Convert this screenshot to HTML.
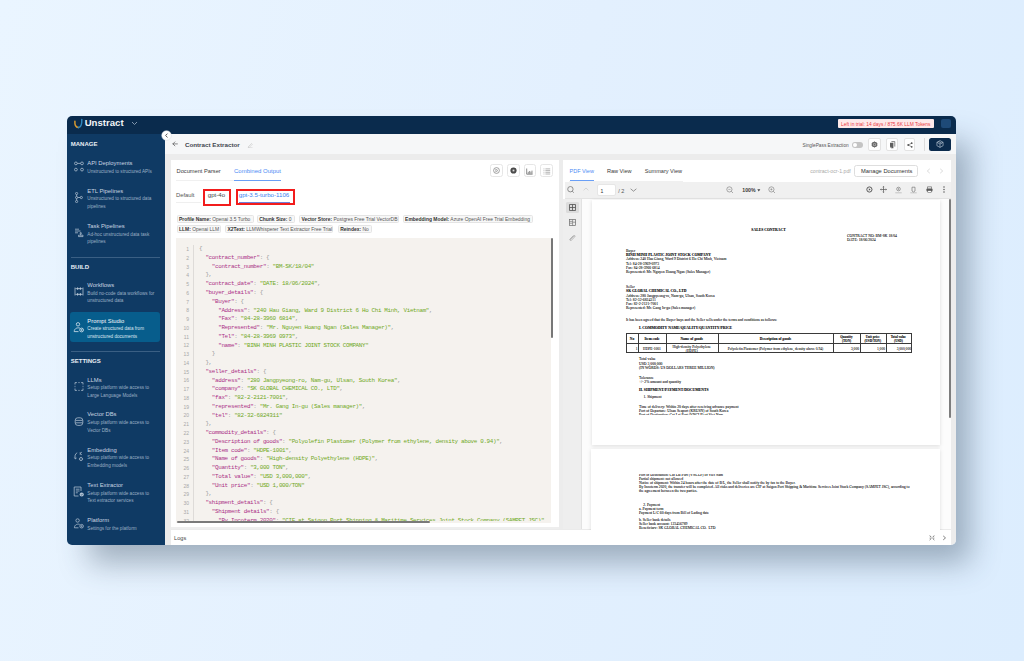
<!DOCTYPE html>
<html><head><meta charset="utf-8">
<style>
*{margin:0;padding:0;box-sizing:border-box}
html,body{width:1024px;height:661px;overflow:hidden}
body{position:relative;font-family:"Liberation Sans",sans-serif;background:linear-gradient(105deg,#eaf5ff 0%,#e3f0fe 50%,#dcedfe 100%)}
.a{position:absolute;white-space:nowrap}
.pd{text-shadow:0 0 0.25px rgba(0,0,0,.6)}
#shadow{position:absolute;left:67px;top:116px;width:889px;height:429px;border-radius:5px;box-shadow:18px 22px 30px -4px rgba(45,66,88,.38)}
#win{position:absolute;left:0;top:0;width:1024px;height:661px;clip-path:inset(116px 68px 116px 67px round 5px)}
</style></head><body>
<div id="shadow"></div>
<div id="win">
<div class="a" style="left:67px;top:116px;width:889.00px;height:18.00px;background:#0a2b4d"></div>
<div class="a" style="left:67px;top:134px;width:98.40px;height:411.00px;background:#0f3a64"></div>
<div class="a" style="left:165.4px;top:134px;width:790.60px;height:411.00px;background:#ececec"></div>
<div class="a" style="left:165.4px;top:134px;width:790.60px;height:20.00px;background:#f6f7f8"></div>
<div class="a" style="left:170.7px;top:159.8px;width:388.30px;height:367.40px;background:#fff"></div>
<div class="a" style="left:563px;top:159.8px;width:388.20px;height:369.20px;background:#fff"></div>
<div class="a" style="left:170.7px;top:529px;width:780.50px;height:16.00px;background:#fff;border-top:1px solid #ebebeb"></div>
<svg class="a" style="left:73px;top:118px;" width="11" height="12" viewBox="0 0 11 12"><path d="M1.9 3.2 C1.6 6.8 2.9 9.2 5.4 9.6" stroke="#d99a2e" stroke-width="1.5" fill="none" stroke-linecap="round"/><path d="M5.4 9.6 C7.8 9.2 9 7 8.8 1.4" stroke="#2f86bd" stroke-width="1.5" fill="none" stroke-linecap="round"/></svg>
<div class="a" style="left:84.70px;top:118.10px;font-size:9.6px;line-height:9.6px;color:#f2f5f8;font-weight:700;font-family:'Liberation Sans';">Unstract</div>
<svg class="a" style="left:131px;top:121px;" width="7" height="5" viewBox="0 0 7 5"><path d="M1 1 L3.5 3.5 L6 1" stroke="#8fa3b8" stroke-width="0.9" fill="none"/></svg>
<div class="a" style="left:838.1px;top:119.2px;width:95.70px;height:8.80px;background:#fde9ea;border-radius:1px"></div>
<div class="a" style="left:841.10px;top:122.96px;font-size:4.89px;line-height:4.89px;color:#ea3a3f;font-weight:400;font-family:'Liberation Sans';">Left in trial: 14 days / 875.6K LLM Tokens</div>
<div class="a" style="left:941px;top:118.7px;width:10.40px;height:9.60px;background:#1e4a78;border-radius:2px"></div>
<div class="a" style="left:70.70px;top:141.29px;font-size:6.03px;line-height:6.03px;color:#e8eef4;font-weight:700;font-family:'Liberation Sans';">MANAGE</div>
<div class="a" style="left:87.30px;top:160.97px;font-size:5.85px;line-height:5.85px;color:#c9d5e1;font-weight:400;font-family:'Liberation Sans';">API Deployments</div>
<div class="a" style="left:87.30px;top:169.58px;font-size:4.65px;line-height:4.65px;color:#9cb0c4;font-weight:400;font-family:'Liberation Sans';">Unstructured to structured APIs</div>
<svg class="a" style="left:73px;top:160.5px;" width="12" height="11" viewBox="0 0 12 11"><g stroke="#b3c3d3" stroke-width="0.75" fill="none"><circle cx="2.9" cy="2.4" r="1.4"/><circle cx="9" cy="2.4" r="1.4"/><path d="M4.3 2.4 H7.6"/><circle cx="2.9" cy="8.6" r="1.4"/><circle cx="9" cy="8.6" r="1.4"/></g></svg>
<div class="a" style="left:87.30px;top:188.57px;font-size:5.85px;line-height:5.85px;color:#c9d5e1;font-weight:400;font-family:'Liberation Sans';">ETL Pipelines</div>
<div class="a" style="left:87.30px;top:197.18px;font-size:4.65px;line-height:4.65px;color:#9cb0c4;font-weight:400;font-family:'Liberation Sans';">Unstructured to structured data</div>
<div class="a" style="left:87.30px;top:204.68px;font-size:4.65px;line-height:4.65px;color:#9cb0c4;font-weight:400;font-family:'Liberation Sans';">pipelines</div>
<svg class="a" style="left:73px;top:191.85px;" width="12" height="11" viewBox="0 0 12 11"><g stroke="#b3c3d3" stroke-width="0.75" fill="none"><circle cx="3.6" cy="1.5" r="1.1"/><circle cx="3.6" cy="5.5" r="1.1"/><circle cx="3.6" cy="9.5" r="1.1"/><circle cx="8.3" cy="5.5" r="1.1"/><path d="M4.7 5.5 H7.2 M3.6 2.6 V4.4 M3.6 6.6 V8.4"/></g></svg>
<div class="a" style="left:87.30px;top:224.07px;font-size:5.85px;line-height:5.85px;color:#c9d5e1;font-weight:400;font-family:'Liberation Sans';">Task Pipelines</div>
<div class="a" style="left:87.30px;top:232.68px;font-size:4.65px;line-height:4.65px;color:#9cb0c4;font-weight:400;font-family:'Liberation Sans';">Ad-hoc unstructured data task</div>
<div class="a" style="left:87.30px;top:240.18px;font-size:4.65px;line-height:4.65px;color:#9cb0c4;font-weight:400;font-family:'Liberation Sans';">pipelines</div>
<svg class="a" style="left:73px;top:227.35px;" width="12" height="11" viewBox="0 0 12 11"><g stroke="#b3c3d3" stroke-width="0.75" fill="none"><path d="M2 2.2 H6 M2 4 H7.5 M2 5.8 H5"/><path d="M5.5 9.6 H10 V8.2 H5.5 Z M7.7 8.2 V6.6"/><circle cx="7.7" cy="6.2" r="0.7"/></g></svg>
<div class="a" style="left:71px;top:257.2px;width:89.00px;height:0.80px;background:#3a5f84"></div>
<div class="a" style="left:70.70px;top:263.88px;font-size:6.03px;line-height:6.03px;color:#e8eef4;font-weight:700;font-family:'Liberation Sans';">BUILD</div>
<div class="a" style="left:87.30px;top:282.97px;font-size:5.85px;line-height:5.85px;color:#c9d5e1;font-weight:400;font-family:'Liberation Sans';">Workflows</div>
<div class="a" style="left:87.30px;top:291.57px;font-size:4.65px;line-height:4.65px;color:#9cb0c4;font-weight:400;font-family:'Liberation Sans';">Build no-code data workflows for</div>
<div class="a" style="left:87.30px;top:299.07px;font-size:4.65px;line-height:4.65px;color:#9cb0c4;font-weight:400;font-family:'Liberation Sans';">unstructured data</div>
<svg class="a" style="left:73px;top:286.25px;" width="12" height="11" viewBox="0 0 12 11"><g stroke="#b3c3d3" stroke-width="0.75" fill="none"><path d="M2 1.5 V9.5 M10 1.5 V9.5"/><path d="M2 2.6 H10 M2 8.4 H10" stroke-width="0.5"/><circle cx="4.6" cy="2.6" r="0.8" fill="#b3c3d3"/><circle cx="7.4" cy="2.6" r="0.8" fill="#b3c3d3"/><circle cx="4.6" cy="8.4" r="0.8" fill="#b3c3d3"/><circle cx="7.4" cy="8.4" r="0.8" fill="#b3c3d3"/></g></svg>
<div class="a" style="left:70.3px;top:311.5px;width:90.20px;height:30.90px;background:#075d8c;border-radius:3px"></div>
<div class="a" style="left:87.30px;top:318.68px;font-size:5.85px;line-height:5.85px;color:#f4f7fa;font-weight:400;font-family:'Liberation Sans';">Prompt Studio</div>
<div class="a" style="left:87.30px;top:327.28px;font-size:4.65px;line-height:4.65px;color:#dfe9f2;font-weight:400;font-family:'Liberation Sans';">Create structured data from</div>
<div class="a" style="left:87.30px;top:334.78px;font-size:4.65px;line-height:4.65px;color:#dfe9f2;font-weight:400;font-family:'Liberation Sans';">unstructured documents</div>
<svg class="a" style="left:73px;top:321.95000000000005px;" width="12" height="11" viewBox="0 0 12 11"><g stroke="#e3ecf4" stroke-width="0.75" fill="none"><circle cx="5" cy="2.3" r="1.7"/><path d="M1.2 9.6 C1.2 6.2 5 5.2 7 6.2"/><path d="M1.2 9.6 H5.5"/><circle cx="8.6" cy="8" r="1.9"/><circle cx="8.6" cy="8" r="0.6"/></g></svg>
<div class="a" style="left:71px;top:351.1px;width:89.00px;height:0.80px;background:#3a5f84"></div>
<div class="a" style="left:70.70px;top:358.38px;font-size:6.03px;line-height:6.03px;color:#e8eef4;font-weight:700;font-family:'Liberation Sans';">SETTINGS</div>
<div class="a" style="left:87.30px;top:377.57px;font-size:5.85px;line-height:5.85px;color:#c9d5e1;font-weight:400;font-family:'Liberation Sans';">LLMs</div>
<div class="a" style="left:87.30px;top:386.18px;font-size:4.65px;line-height:4.65px;color:#9cb0c4;font-weight:400;font-family:'Liberation Sans';">Setup platform wide access to</div>
<div class="a" style="left:87.30px;top:393.68px;font-size:4.65px;line-height:4.65px;color:#9cb0c4;font-weight:400;font-family:'Liberation Sans';">Large Language Models</div>
<svg class="a" style="left:73px;top:380.85px;" width="12" height="11" viewBox="0 0 12 11"><g stroke="#b3c3d3" stroke-width="0.75" fill="none"><path d="M2 3.5 V1.6 H3.9 M8.1 1.6 H10 V3.5 M10 7.5 V9.4 H8.1 M3.9 9.4 H2 V7.5"/><path d="M5.2 1.6 H6.8 M5.2 9.4 H6.8 M2 4.8 V6.2 M10 4.8 V6.2" stroke-width="0.6"/></g></svg>
<div class="a" style="left:87.30px;top:412.47px;font-size:5.85px;line-height:5.85px;color:#c9d5e1;font-weight:400;font-family:'Liberation Sans';">Vector DBs</div>
<div class="a" style="left:87.30px;top:421.07px;font-size:4.65px;line-height:4.65px;color:#9cb0c4;font-weight:400;font-family:'Liberation Sans';">Setup platform wide access to</div>
<div class="a" style="left:87.30px;top:428.57px;font-size:4.65px;line-height:4.65px;color:#9cb0c4;font-weight:400;font-family:'Liberation Sans';">Vector DBs</div>
<svg class="a" style="left:73px;top:415.75px;" width="12" height="11" viewBox="0 0 12 11"><g stroke="#b3c3d3" stroke-width="0.75" fill="none"><rect x="2.2" y="1.8" width="7.6" height="7.6" rx="2.6"/><path d="M2.4 4.4 H9.6 M2.4 6.8 H9.6"/></g></svg>
<div class="a" style="left:87.30px;top:447.88px;font-size:5.85px;line-height:5.85px;color:#c9d5e1;font-weight:400;font-family:'Liberation Sans';">Embedding</div>
<div class="a" style="left:87.30px;top:456.48px;font-size:4.65px;line-height:4.65px;color:#9cb0c4;font-weight:400;font-family:'Liberation Sans';">Setup platform wide access to</div>
<div class="a" style="left:87.30px;top:463.98px;font-size:4.65px;line-height:4.65px;color:#9cb0c4;font-weight:400;font-family:'Liberation Sans';">Embedding models</div>
<svg class="a" style="left:73px;top:451.15000000000003px;" width="12" height="11" viewBox="0 0 12 11"><g stroke="#b3c3d3" stroke-width="0.75" fill="none"><path d="M4.2 1.8 C2 2.6 1.5 5.5 2.4 7.8 M1.4 6.6 L2.4 7.9 L3.6 7"/><path d="M7.2 1 V4 M7.2 2.5 L9 1 M7.2 2.5 L9 4" stroke-width="0.6"/><circle cx="8" cy="8" r="1.5"/><path d="M8 5.9 V6.5 M8 9.5 V10.1 M5.9 8 H6.5 M9.5 8 H10.1" stroke-width="0.6"/></g></svg>
<div class="a" style="left:87.30px;top:483.07px;font-size:5.85px;line-height:5.85px;color:#c9d5e1;font-weight:400;font-family:'Liberation Sans';">Text Extractor</div>
<div class="a" style="left:87.30px;top:491.68px;font-size:4.65px;line-height:4.65px;color:#9cb0c4;font-weight:400;font-family:'Liberation Sans';">Setup platform wide access to</div>
<div class="a" style="left:87.30px;top:499.18px;font-size:4.65px;line-height:4.65px;color:#9cb0c4;font-weight:400;font-family:'Liberation Sans';">Text extractor services</div>
<svg class="a" style="left:73px;top:486.35px;" width="12" height="11" viewBox="0 0 12 11"><g stroke="#b3c3d3" stroke-width="0.75" fill="none"><path d="M8 5 V1 H1.2 V10 H5.5"/><path d="M2.8 3.2 H6.5 M2.8 5 H6.5 M2.8 6.8 H4.8"/><circle cx="8.7" cy="8.5" r="2.1" fill="#b3c3d3" stroke="none"/><path d="M7.8 8.5 L8.5 9.2 L9.7 7.8" stroke="#0f3a64" stroke-width="0.6"/></g></svg>
<div class="a" style="left:87.30px;top:518.18px;font-size:5.85px;line-height:5.85px;color:#c9d5e1;font-weight:400;font-family:'Liberation Sans';">Platform</div>
<div class="a" style="left:87.30px;top:526.77px;font-size:4.65px;line-height:4.65px;color:#9cb0c4;font-weight:400;font-family:'Liberation Sans';">Settings for the platform</div>
<svg class="a" style="left:73px;top:517.7px;" width="12" height="11" viewBox="0 0 12 11"><g stroke="#b3c3d3" stroke-width="0.75" fill="none"><circle cx="4.6" cy="2.5" r="1.7"/><path d="M1.4 9.8 C1.4 6.4 5 5.6 6.8 6.4"/><path d="M1.4 9.8 H5.5"/><circle cx="8.6" cy="8.2" r="1.8"/><circle cx="8.6" cy="8.2" r="0.5"/></g></svg>
<svg class="a" style="left:161px;top:129.7px;" width="11" height="11" viewBox="0 0 11 11"><circle cx="5.5" cy="5.5" r="4.8" fill="#fff" stroke="#d8dde3" stroke-width="0.5"/><path d="M6.5 3.6 L4.6 5.5 L6.5 7.4" stroke="#444" stroke-width="0.9" fill="none"/></svg>
<svg class="a" style="left:172.3px;top:141.2px;" width="6" height="6" viewBox="0 0 6 6"><path d="M5.4 2.9 H0.9 M2.9 0.9 L0.9 2.9 L2.9 4.9" stroke="#4a4a4a" stroke-width="0.65" fill="none" stroke-linecap="round" stroke-linejoin="round"/></svg>
<div class="a" style="left:184.90px;top:142.18px;font-size:6.25px;line-height:6.25px;color:#41464e;font-weight:700;font-family:'Liberation Sans';">Contract Extractor</div>
<svg class="a" style="left:247px;top:141.5px;" width="6" height="6" viewBox="0 0 6 6"><path d="M1 5 L4.5 1.5 L5.3 2.3 L1.8 5.8 Z M0.8 5.8 H5.5" stroke="#c8c8c8" stroke-width="0.6" fill="none"/></svg>
<div class="a" style="left:802.50px;top:144.22px;font-size:4.75px;line-height:4.75px;color:#555;font-weight:400;font-family:'Liberation Sans';">SinglePass Extraction</div>
<div class="a" style="left:852.3px;top:142.4px;width:11.10px;height:5.80px;background:#c4c4c4;border-radius:3px"></div>
<div class="a" style="left:853.2px;top:143.3px;width:4.00px;height:4.00px;background:#fff;border-radius:50%"></div>
<div class="a" style="left:868px;top:138.2px;width:12.50px;height:12.50px;background:#fff;border:0.6px solid #e3e3e3;border-radius:2px"></div>
<div class="a" style="left:885.5px;top:138.2px;width:12.40px;height:12.50px;background:#fff;border:0.6px solid #e3e3e3;border-radius:2px"></div>
<div class="a" style="left:903.7px;top:138.2px;width:11.60px;height:12.50px;background:#fff;border:0.6px solid #e3e3e3;border-radius:2px"></div>
<svg class="a" style="left:870.7px;top:140.7px;" width="7" height="7" viewBox="0 0 7 7"><path d="M3.5 0.3 L4.3 1.1 L5.5 0.9 L5.7 2.1 L6.7 2.8 L6.1 3.5 L6.7 4.2 L5.7 4.9 L5.5 6.1 L4.3 5.9 L3.5 6.7 L2.7 5.9 L1.5 6.1 L1.3 4.9 L0.3 4.2 L0.9 3.5 L0.3 2.8 L1.3 2.1 L1.5 0.9 L2.7 1.1 Z" fill="#6a6a6a"/><circle cx="3.5" cy="3.5" r="1.5" fill="#bbb"/><circle cx="3.5" cy="3.5" r="0.9" fill="#6a6a6a"/></svg>
<svg class="a" style="left:888.6px;top:140.8px;" width="7" height="8" viewBox="0 0 7 8"><path d="M1 1.8 H4.4 V7.2 H2.2 L1 6 Z" fill="#5f5f5f"/><path d="M2.4 0.6 H5.8 V5.6" stroke="#5f5f5f" stroke-width="0.75" fill="none"/><path d="M1.2 6.1 H2.3 V7.1" stroke="#ddd" stroke-width="0.4" fill="none"/></svg>
<svg class="a" style="left:906.5px;top:141.5px;" width="6" height="6" viewBox="0 0 6 6"><circle cx="4.7" cy="1.2" r="0.9" fill="#555"/><circle cx="1.2" cy="3" r="0.9" fill="#555"/><circle cx="4.7" cy="4.8" r="0.9" fill="#555"/><path d="M4.7 1.2 L1.2 3 L4.7 4.8" stroke="#555" stroke-width="0.6" fill="none"/></svg>
<div class="a" style="left:924.2px;top:138px;width:0.70px;height:13.00px;background:#dcdcdc"></div>
<div class="a" style="left:929.1px;top:137.9px;width:21.60px;height:13.10px;background:#0b2b4d;border-radius:2.5px"></div>
<svg class="a" style="left:936.1px;top:139.8px;" width="8" height="8" viewBox="0 0 8 8"><path d="M4 0.6 L7.1 2.3 V5.7 L4 7.4 L0.9 5.7 V2.3 Z M0.9 2.3 L4 4 L7.1 2.3 M4 4 V7.4 M2.4 1.45 L5.6 3.15" stroke="#d9e2ea" stroke-width="0.55" fill="none"/></svg>
<div class="a" style="left:176.60px;top:169.41px;font-size:5.68px;line-height:5.68px;color:#3b3b3b;font-weight:400;font-family:'Liberation Sans';">Document Parser</div>
<div class="a" style="left:234.00px;top:167.90px;font-size:6.0px;line-height:6.0px;color:#4b8bf4;font-weight:400;font-family:'Liberation Sans';">Combined Output</div>
<div class="a" style="left:176px;top:180.2px;width:105.00px;height:0.60px;background:#f0f0f0"></div>
<div class="a" style="left:234px;top:179.5px;width:47.00px;height:1.30px;background:#6a9ff6"></div>
<div class="a" style="left:176.00px;top:192.78px;font-size:5.84px;line-height:5.84px;color:#555;font-weight:400;font-family:'Liberation Sans';">Default</div>
<div class="a" style="left:176px;top:202.3px;width:25.00px;height:0.50px;background:#efefef"></div>
<div class="a" style="left:207.80px;top:192.15px;font-size:6.1px;line-height:6.1px;color:#444;font-weight:400;font-family:'Liberation Sans';">gpt-4o</div>
<div class="a" style="left:238.75px;top:192.12px;font-size:6.16px;line-height:6.16px;color:#3b7ff0;font-weight:400;font-family:'Liberation Sans';">gpt-3.5-turbo-1106</div>
<div class="a" style="left:238.75px;top:202.0px;width:50.75px;height:0.90px;background:#6f7fd8"></div>
<div class="a" style="left:202.8px;top:188.6px;width:28.45px;height:17.80px;border:2px solid #f21c1c"></div>
<div class="a" style="left:236.4px;top:188.6px;width:58.60px;height:16.80px;border:2px solid #f21c1c"></div>
<div class="a" style="left:176.8px;top:215.3px;width:77.10px;height:8.10px;background:#f7f7f7;border:0.6px solid #e4e4e4;border-radius:1.5px"></div>
<div class="a" style="left:179.00px;top:216.90px;font-size:4.95px;line-height:5.1px;color:#555"><b style="color:#333">Profile Name:</b> Openai 3.5 Turbo</div>
<div class="a" style="left:257px;top:215.3px;width:38.10px;height:8.10px;background:#f7f7f7;border:0.6px solid #e4e4e4;border-radius:1.5px"></div>
<div class="a" style="left:259.20px;top:216.90px;font-size:4.95px;line-height:5.1px;color:#555"><b style="color:#333">Chunk Size:</b> 0</div>
<div class="a" style="left:299.2px;top:215.3px;width:99.50px;height:8.10px;background:#f7f7f7;border:0.6px solid #e4e4e4;border-radius:1.5px"></div>
<div class="a" style="left:301.40px;top:216.90px;font-size:4.95px;line-height:5.1px;color:#555"><b style="color:#333">Vector Store:</b> Postgres Free Trial VectorDB</div>
<div class="a" style="left:402.9px;top:215.3px;width:130.40px;height:8.10px;background:#f7f7f7;border:0.6px solid #e4e4e4;border-radius:1.5px"></div>
<div class="a" style="left:405.10px;top:216.90px;font-size:4.95px;line-height:5.1px;color:#555"><b style="color:#333">Embedding Model:</b> Azure OpenAI Free Trial Embedding</div>
<div class="a" style="left:176.8px;top:225.0px;width:44.50px;height:8.10px;background:#f7f7f7;border:0.6px solid #e4e4e4;border-radius:1.5px"></div>
<div class="a" style="left:179.00px;top:226.60px;font-size:4.95px;line-height:5.1px;color:#555"><b style="color:#333">LLM:</b> Openai LLM</div>
<div class="a" style="left:225.3px;top:225.0px;width:108.20px;height:8.10px;background:#f7f7f7;border:0.6px solid #e4e4e4;border-radius:1.5px"></div>
<div class="a" style="left:227.50px;top:226.60px;font-size:4.95px;line-height:5.1px;color:#555"><b style="color:#333">X2Text:</b> LLMWhisperer Text Extractor Free Trial</div>
<div class="a" style="left:338px;top:225.0px;width:34.30px;height:8.10px;background:#f7f7f7;border:0.6px solid #e4e4e4;border-radius:1.5px"></div>
<div class="a" style="left:340.20px;top:226.60px;font-size:4.95px;line-height:5.1px;color:#555"><b style="color:#333">Reindex:</b> No</div>
<div class="a" style="left:490.4px;top:164.3px;width:12.70px;height:12.90px;background:#fff;border:0.6px solid #e6e6e6;border-radius:2.5px"></div>
<div class="a" style="left:507px;top:164.3px;width:12.70px;height:12.90px;background:#fff;border:0.6px solid #e6e6e6;border-radius:2.5px"></div>
<div class="a" style="left:523.8px;top:164.3px;width:12.70px;height:12.90px;background:#fff;border:0.6px solid #e6e6e6;border-radius:2.5px"></div>
<div class="a" style="left:540.4px;top:164.3px;width:12.70px;height:12.90px;background:#fff;border:0.6px solid #e6e6e6;border-radius:2.5px"></div>
<svg class="a" style="left:493.2px;top:167.3px;" width="7" height="7" viewBox="0 0 7 7"><circle cx="3.5" cy="3.5" r="2.9" stroke="#7a7a7a" stroke-width="0.7" fill="none"/><path d="M2.8 2.1 L4.9 3.5 L2.8 4.9 Z" stroke="#7a7a7a" stroke-width="0.55" fill="none"/></svg>
<svg class="a" style="left:509.8px;top:167.3px;" width="7" height="7" viewBox="0 0 7 7"><circle cx="3.5" cy="3.5" r="3.1" fill="#4a4a4a"/><rect x="2.6" y="2.6" width="1.8" height="1.8" fill="#ddd"/></svg>
<svg class="a" style="left:526.4px;top:167.6px;" width="7" height="7" viewBox="0 0 7 7"><path d="M0.7 0.5 V6.2 H6.6" stroke="#666" stroke-width="0.75" fill="none"/><path d="M2.3 3.8 V5.8 M3.6 3 V5.8 M4.9 3.6 V5.8 M6 2.6 V5.8" stroke="#666" stroke-width="0.7"/></svg>
<svg class="a" style="left:543px;top:167.8px;" width="8" height="7" viewBox="0 0 8 7"><path d="M2.4 0.9 H7.2 M2.4 2.6 H7.2 M2.4 4.3 H7.2 M2.4 6 H7.2" stroke="#777" stroke-width="0.55"/><path d="M0.3 0.9 H1.6 M0.3 2.6 H1.6 M0.3 4.3 H1.6 M0.3 6 H1.6" stroke="#aaa" stroke-width="0.55"/></svg>
<div class="a" style="left:569.50px;top:169.15px;font-size:5.5px;line-height:5.5px;color:#4b8bf4;font-weight:400;font-family:'Liberation Sans';">PDF View</div>
<div class="a" style="left:606.90px;top:169.11px;font-size:5.58px;line-height:5.58px;color:#3b3b3b;font-weight:400;font-family:'Liberation Sans';">Raw View</div>
<div class="a" style="left:644.70px;top:169.11px;font-size:5.58px;line-height:5.58px;color:#3b3b3b;font-weight:400;font-family:'Liberation Sans';">Summary View</div>
<div class="a" style="left:569px;top:181.0px;width:114.00px;height:0.60px;background:#f0f0f0"></div>
<div class="a" style="left:569.5px;top:179.5px;width:24.20px;height:1.30px;background:#6a9ff6"></div>
<div class="a" style="left:810.20px;top:169.01px;font-size:5.18px;line-height:5.18px;color:#a9a9a9;font-weight:400;font-family:'Liberation Sans';">contract-ocr-1.pdf</div>
<div class="a" style="left:854.4px;top:164.7px;width:64.00px;height:12.50px;background:#fff;border:0.6px solid #dedede;border-radius:2.5px"></div>
<div class="a" style="left:861.00px;top:169.12px;font-size:5.75px;line-height:5.75px;color:#333;font-weight:400;font-family:'Liberation Sans';">Manage Documents</div>
<svg class="a" style="left:926px;top:168px;" width="5" height="6" viewBox="0 0 5 6"><path d="M3.8 0.8 L1.3 3 L3.8 5.2" stroke="#c4c4c4" stroke-width="0.6" fill="none"/></svg>
<svg class="a" style="left:938.5px;top:168px;" width="5" height="6" viewBox="0 0 5 6"><path d="M1.2 0.8 L3.7 3 L1.2 5.2" stroke="#c4c4c4" stroke-width="0.6" fill="none"/></svg>
<div class="a" style="left:176.3px;top:238px;width:374.70px;height:284.70px;background:#f5f2ee"></div>
<div class="a" style="left:193.0px;top:245px;width:0.70px;height:277.70px;background:#dedbd8"></div>
<div class="a" style="left:176.3px;top:238px;width:374.1px;height:283px;overflow:hidden"><div class="a" style="margin-left:-176.3px;left:176px;width:13px;text-align:right;margin-top:-238px;top:246.10px;font-size:5.0px;line-height:6px;color:#a8a8a8;font-family:'Liberation Sans'">1</div><div class="a" style="margin-left:-176.3px;left:199.00px;margin-top:-238px;top:246.20px;font-size:5.9px;letter-spacing:-0.34px;line-height:6px;font-family:'Liberation Mono'"><span style="color:#9a9a9a">{</span></div><div class="a" style="margin-left:-176.3px;left:176px;width:13px;text-align:right;margin-top:-238px;top:254.86px;font-size:5.0px;line-height:6px;color:#a8a8a8;font-family:'Liberation Sans'">2</div><div class="a" style="margin-left:-176.3px;left:205.40px;margin-top:-238px;top:254.96px;font-size:5.9px;letter-spacing:-0.34px;line-height:6px;font-family:'Liberation Mono'"><span style="color:#ab2f86">"contract_number"</span><span style="color:#9a9a9a">: {</span></div><div class="a" style="margin-left:-176.3px;left:176px;width:13px;text-align:right;margin-top:-238px;top:263.61px;font-size:5.0px;line-height:6px;color:#a8a8a8;font-family:'Liberation Sans'">3</div><div class="a" style="margin-left:-176.3px;left:211.80px;margin-top:-238px;top:263.71px;font-size:5.9px;letter-spacing:-0.34px;line-height:6px;font-family:'Liberation Mono'"><span style="color:#ab2f86">"contract_number"</span><span style="color:#9a9a9a">: </span><span style="color:#6fa823">"BM-SK/18/04"</span></div><div class="a" style="margin-left:-176.3px;left:176px;width:13px;text-align:right;margin-top:-238px;top:272.37px;font-size:5.0px;line-height:6px;color:#a8a8a8;font-family:'Liberation Sans'">4</div><div class="a" style="margin-left:-176.3px;left:205.40px;margin-top:-238px;top:272.47px;font-size:5.9px;letter-spacing:-0.34px;line-height:6px;font-family:'Liberation Mono'"><span style="color:#9a9a9a">},</span></div><div class="a" style="margin-left:-176.3px;left:176px;width:13px;text-align:right;margin-top:-238px;top:281.13px;font-size:5.0px;line-height:6px;color:#a8a8a8;font-family:'Liberation Sans'">5</div><div class="a" style="margin-left:-176.3px;left:205.40px;margin-top:-238px;top:281.23px;font-size:5.9px;letter-spacing:-0.34px;line-height:6px;font-family:'Liberation Mono'"><span style="color:#ab2f86">"contract_date"</span><span style="color:#9a9a9a">: </span><span style="color:#6fa823">"DATE: 18/06/2024"</span><span style="color:#9a9a9a">,</span></div><div class="a" style="margin-left:-176.3px;left:176px;width:13px;text-align:right;margin-top:-238px;top:289.88px;font-size:5.0px;line-height:6px;color:#a8a8a8;font-family:'Liberation Sans'">6</div><div class="a" style="margin-left:-176.3px;left:205.40px;margin-top:-238px;top:289.99px;font-size:5.9px;letter-spacing:-0.34px;line-height:6px;font-family:'Liberation Mono'"><span style="color:#ab2f86">"buyer_details"</span><span style="color:#9a9a9a">: {</span></div><div class="a" style="margin-left:-176.3px;left:176px;width:13px;text-align:right;margin-top:-238px;top:298.64px;font-size:5.0px;line-height:6px;color:#a8a8a8;font-family:'Liberation Sans'">7</div><div class="a" style="margin-left:-176.3px;left:211.80px;margin-top:-238px;top:298.74px;font-size:5.9px;letter-spacing:-0.34px;line-height:6px;font-family:'Liberation Mono'"><span style="color:#ab2f86">"Buyer"</span><span style="color:#9a9a9a">: {</span></div><div class="a" style="margin-left:-176.3px;left:176px;width:13px;text-align:right;margin-top:-238px;top:307.40px;font-size:5.0px;line-height:6px;color:#a8a8a8;font-family:'Liberation Sans'">8</div><div class="a" style="margin-left:-176.3px;left:218.20px;margin-top:-238px;top:307.50px;font-size:5.9px;letter-spacing:-0.34px;line-height:6px;font-family:'Liberation Mono'"><span style="color:#ab2f86">"Address"</span><span style="color:#9a9a9a">: </span><span style="color:#6fa823">"240 Hau Giang, Ward 9 District 6 Ho Chi Minh, Vietnam"</span><span style="color:#9a9a9a">,</span></div><div class="a" style="margin-left:-176.3px;left:176px;width:13px;text-align:right;margin-top:-238px;top:316.16px;font-size:5.0px;line-height:6px;color:#a8a8a8;font-family:'Liberation Sans'">9</div><div class="a" style="margin-left:-176.3px;left:218.20px;margin-top:-238px;top:316.26px;font-size:5.9px;letter-spacing:-0.34px;line-height:6px;font-family:'Liberation Mono'"><span style="color:#ab2f86">"Fax"</span><span style="color:#9a9a9a">: </span><span style="color:#6fa823">"84-28-3960 6814"</span><span style="color:#9a9a9a">,</span></div><div class="a" style="margin-left:-176.3px;left:176px;width:13px;text-align:right;margin-top:-238px;top:324.91px;font-size:5.0px;line-height:6px;color:#a8a8a8;font-family:'Liberation Sans'">10</div><div class="a" style="margin-left:-176.3px;left:218.20px;margin-top:-238px;top:325.01px;font-size:5.9px;letter-spacing:-0.34px;line-height:6px;font-family:'Liberation Mono'"><span style="color:#ab2f86">"Represented"</span><span style="color:#9a9a9a">: </span><span style="color:#6fa823">"Mr. Nguyen Hoang Ngan (Sales Manager)"</span><span style="color:#9a9a9a">,</span></div><div class="a" style="margin-left:-176.3px;left:176px;width:13px;text-align:right;margin-top:-238px;top:333.67px;font-size:5.0px;line-height:6px;color:#a8a8a8;font-family:'Liberation Sans'">11</div><div class="a" style="margin-left:-176.3px;left:218.20px;margin-top:-238px;top:333.77px;font-size:5.9px;letter-spacing:-0.34px;line-height:6px;font-family:'Liberation Mono'"><span style="color:#ab2f86">"Tel"</span><span style="color:#9a9a9a">: </span><span style="color:#6fa823">"84-28-3969 0973"</span><span style="color:#9a9a9a">,</span></div><div class="a" style="margin-left:-176.3px;left:176px;width:13px;text-align:right;margin-top:-238px;top:342.43px;font-size:5.0px;line-height:6px;color:#a8a8a8;font-family:'Liberation Sans'">12</div><div class="a" style="margin-left:-176.3px;left:218.20px;margin-top:-238px;top:342.53px;font-size:5.9px;letter-spacing:-0.34px;line-height:6px;font-family:'Liberation Mono'"><span style="color:#ab2f86">"name"</span><span style="color:#9a9a9a">: </span><span style="color:#6fa823">"BINH MINH PLASTIC JOINT STOCK COMPANY"</span></div><div class="a" style="margin-left:-176.3px;left:176px;width:13px;text-align:right;margin-top:-238px;top:351.18px;font-size:5.0px;line-height:6px;color:#a8a8a8;font-family:'Liberation Sans'">13</div><div class="a" style="margin-left:-176.3px;left:211.80px;margin-top:-238px;top:351.28px;font-size:5.9px;letter-spacing:-0.34px;line-height:6px;font-family:'Liberation Mono'"><span style="color:#9a9a9a">}</span></div><div class="a" style="margin-left:-176.3px;left:176px;width:13px;text-align:right;margin-top:-238px;top:359.94px;font-size:5.0px;line-height:6px;color:#a8a8a8;font-family:'Liberation Sans'">14</div><div class="a" style="margin-left:-176.3px;left:205.40px;margin-top:-238px;top:360.04px;font-size:5.9px;letter-spacing:-0.34px;line-height:6px;font-family:'Liberation Mono'"><span style="color:#9a9a9a">},</span></div><div class="a" style="margin-left:-176.3px;left:176px;width:13px;text-align:right;margin-top:-238px;top:368.70px;font-size:5.0px;line-height:6px;color:#a8a8a8;font-family:'Liberation Sans'">15</div><div class="a" style="margin-left:-176.3px;left:205.40px;margin-top:-238px;top:368.80px;font-size:5.9px;letter-spacing:-0.34px;line-height:6px;font-family:'Liberation Mono'"><span style="color:#ab2f86">"seller_details"</span><span style="color:#9a9a9a">: {</span></div><div class="a" style="margin-left:-176.3px;left:176px;width:13px;text-align:right;margin-top:-238px;top:377.45px;font-size:5.0px;line-height:6px;color:#a8a8a8;font-family:'Liberation Sans'">16</div><div class="a" style="margin-left:-176.3px;left:211.80px;margin-top:-238px;top:377.56px;font-size:5.9px;letter-spacing:-0.34px;line-height:6px;font-family:'Liberation Mono'"><span style="color:#ab2f86">"address"</span><span style="color:#9a9a9a">: </span><span style="color:#6fa823">"280 Jangpyeong-ro, Nam-gu, Ulsan, South Korea"</span><span style="color:#9a9a9a">,</span></div><div class="a" style="margin-left:-176.3px;left:176px;width:13px;text-align:right;margin-top:-238px;top:386.21px;font-size:5.0px;line-height:6px;color:#a8a8a8;font-family:'Liberation Sans'">17</div><div class="a" style="margin-left:-176.3px;left:211.80px;margin-top:-238px;top:386.31px;font-size:5.9px;letter-spacing:-0.34px;line-height:6px;font-family:'Liberation Mono'"><span style="color:#ab2f86">"company"</span><span style="color:#9a9a9a">: </span><span style="color:#6fa823">"SK GLOBAL CHEMICAL CO., LTD"</span><span style="color:#9a9a9a">,</span></div><div class="a" style="margin-left:-176.3px;left:176px;width:13px;text-align:right;margin-top:-238px;top:394.97px;font-size:5.0px;line-height:6px;color:#a8a8a8;font-family:'Liberation Sans'">18</div><div class="a" style="margin-left:-176.3px;left:211.80px;margin-top:-238px;top:395.07px;font-size:5.9px;letter-spacing:-0.34px;line-height:6px;font-family:'Liberation Mono'"><span style="color:#ab2f86">"fax"</span><span style="color:#9a9a9a">: </span><span style="color:#6fa823">"82-2-2121-7001"</span><span style="color:#9a9a9a">,</span></div><div class="a" style="margin-left:-176.3px;left:176px;width:13px;text-align:right;margin-top:-238px;top:403.73px;font-size:5.0px;line-height:6px;color:#a8a8a8;font-family:'Liberation Sans'">19</div><div class="a" style="margin-left:-176.3px;left:211.80px;margin-top:-238px;top:403.83px;font-size:5.9px;letter-spacing:-0.34px;line-height:6px;font-family:'Liberation Mono'"><span style="color:#ab2f86">"represented"</span><span style="color:#9a9a9a">: </span><span style="color:#6fa823">"Mr. Gang In-gu (Sales manager)"</span><span style="color:#9a9a9a">,</span></div><div class="a" style="margin-left:-176.3px;left:176px;width:13px;text-align:right;margin-top:-238px;top:412.48px;font-size:5.0px;line-height:6px;color:#a8a8a8;font-family:'Liberation Sans'">20</div><div class="a" style="margin-left:-176.3px;left:211.80px;margin-top:-238px;top:412.58px;font-size:5.9px;letter-spacing:-0.34px;line-height:6px;font-family:'Liberation Mono'"><span style="color:#ab2f86">"tel"</span><span style="color:#9a9a9a">: </span><span style="color:#6fa823">"82-32-6824311"</span></div><div class="a" style="margin-left:-176.3px;left:176px;width:13px;text-align:right;margin-top:-238px;top:421.24px;font-size:5.0px;line-height:6px;color:#a8a8a8;font-family:'Liberation Sans'">21</div><div class="a" style="margin-left:-176.3px;left:205.40px;margin-top:-238px;top:421.34px;font-size:5.9px;letter-spacing:-0.34px;line-height:6px;font-family:'Liberation Mono'"><span style="color:#9a9a9a">},</span></div><div class="a" style="margin-left:-176.3px;left:176px;width:13px;text-align:right;margin-top:-238px;top:430.00px;font-size:5.0px;line-height:6px;color:#a8a8a8;font-family:'Liberation Sans'">22</div><div class="a" style="margin-left:-176.3px;left:205.40px;margin-top:-238px;top:430.10px;font-size:5.9px;letter-spacing:-0.34px;line-height:6px;font-family:'Liberation Mono'"><span style="color:#ab2f86">"commodity_details"</span><span style="color:#9a9a9a">: {</span></div><div class="a" style="margin-left:-176.3px;left:176px;width:13px;text-align:right;margin-top:-238px;top:438.75px;font-size:5.0px;line-height:6px;color:#a8a8a8;font-family:'Liberation Sans'">23</div><div class="a" style="margin-left:-176.3px;left:211.80px;margin-top:-238px;top:438.85px;font-size:5.9px;letter-spacing:-0.34px;line-height:6px;font-family:'Liberation Mono'"><span style="color:#ab2f86">"Description of goods"</span><span style="color:#9a9a9a">: </span><span style="color:#6fa823">"Polyolefin Plastomer (Polymer from ethylene, density above 0.94)"</span><span style="color:#9a9a9a">,</span></div><div class="a" style="margin-left:-176.3px;left:176px;width:13px;text-align:right;margin-top:-238px;top:447.51px;font-size:5.0px;line-height:6px;color:#a8a8a8;font-family:'Liberation Sans'">24</div><div class="a" style="margin-left:-176.3px;left:211.80px;margin-top:-238px;top:447.61px;font-size:5.9px;letter-spacing:-0.34px;line-height:6px;font-family:'Liberation Mono'"><span style="color:#ab2f86">"Item code"</span><span style="color:#9a9a9a">: </span><span style="color:#6fa823">"HDPE-1001"</span><span style="color:#9a9a9a">,</span></div><div class="a" style="margin-left:-176.3px;left:176px;width:13px;text-align:right;margin-top:-238px;top:456.27px;font-size:5.0px;line-height:6px;color:#a8a8a8;font-family:'Liberation Sans'">25</div><div class="a" style="margin-left:-176.3px;left:211.80px;margin-top:-238px;top:456.37px;font-size:5.9px;letter-spacing:-0.34px;line-height:6px;font-family:'Liberation Mono'"><span style="color:#ab2f86">"Name of goods"</span><span style="color:#9a9a9a">: </span><span style="color:#6fa823">"High-density Polyethylene (HDPE)"</span><span style="color:#9a9a9a">,</span></div><div class="a" style="margin-left:-176.3px;left:176px;width:13px;text-align:right;margin-top:-238px;top:465.02px;font-size:5.0px;line-height:6px;color:#a8a8a8;font-family:'Liberation Sans'">26</div><div class="a" style="margin-left:-176.3px;left:211.80px;margin-top:-238px;top:465.12px;font-size:5.9px;letter-spacing:-0.34px;line-height:6px;font-family:'Liberation Mono'"><span style="color:#ab2f86">"Quantity"</span><span style="color:#9a9a9a">: </span><span style="color:#6fa823">"3,000 TON"</span><span style="color:#9a9a9a">,</span></div><div class="a" style="margin-left:-176.3px;left:176px;width:13px;text-align:right;margin-top:-238px;top:473.78px;font-size:5.0px;line-height:6px;color:#a8a8a8;font-family:'Liberation Sans'">27</div><div class="a" style="margin-left:-176.3px;left:211.80px;margin-top:-238px;top:473.88px;font-size:5.9px;letter-spacing:-0.34px;line-height:6px;font-family:'Liberation Mono'"><span style="color:#ab2f86">"Total value"</span><span style="color:#9a9a9a">: </span><span style="color:#6fa823">"USD 3,000,000"</span><span style="color:#9a9a9a">,</span></div><div class="a" style="margin-left:-176.3px;left:176px;width:13px;text-align:right;margin-top:-238px;top:482.54px;font-size:5.0px;line-height:6px;color:#a8a8a8;font-family:'Liberation Sans'">28</div><div class="a" style="margin-left:-176.3px;left:211.80px;margin-top:-238px;top:482.64px;font-size:5.9px;letter-spacing:-0.34px;line-height:6px;font-family:'Liberation Mono'"><span style="color:#ab2f86">"Unit price"</span><span style="color:#9a9a9a">: </span><span style="color:#6fa823">"USD 1,000/TON"</span></div><div class="a" style="margin-left:-176.3px;left:176px;width:13px;text-align:right;margin-top:-238px;top:491.30px;font-size:5.0px;line-height:6px;color:#a8a8a8;font-family:'Liberation Sans'">29</div><div class="a" style="margin-left:-176.3px;left:205.40px;margin-top:-238px;top:491.40px;font-size:5.9px;letter-spacing:-0.34px;line-height:6px;font-family:'Liberation Mono'"><span style="color:#9a9a9a">},</span></div><div class="a" style="margin-left:-176.3px;left:176px;width:13px;text-align:right;margin-top:-238px;top:500.05px;font-size:5.0px;line-height:6px;color:#a8a8a8;font-family:'Liberation Sans'">30</div><div class="a" style="margin-left:-176.3px;left:205.40px;margin-top:-238px;top:500.15px;font-size:5.9px;letter-spacing:-0.34px;line-height:6px;font-family:'Liberation Mono'"><span style="color:#ab2f86">"shipment_details"</span><span style="color:#9a9a9a">: {</span></div><div class="a" style="margin-left:-176.3px;left:176px;width:13px;text-align:right;margin-top:-238px;top:508.81px;font-size:5.0px;line-height:6px;color:#a8a8a8;font-family:'Liberation Sans'">31</div><div class="a" style="margin-left:-176.3px;left:211.80px;margin-top:-238px;top:508.91px;font-size:5.9px;letter-spacing:-0.34px;line-height:6px;font-family:'Liberation Mono'"><span style="color:#ab2f86">"Shipment details"</span><span style="color:#9a9a9a">: {</span></div><div class="a" style="margin-left:-176.3px;left:176px;width:13px;text-align:right;margin-top:-238px;top:517.57px;font-size:5.0px;line-height:6px;color:#a8a8a8;font-family:'Liberation Sans'">32</div><div class="a" style="margin-left:-176.3px;left:218.20px;margin-top:-238px;top:517.67px;font-size:5.9px;letter-spacing:-0.34px;line-height:6px;font-family:'Liberation Mono'"><span style="color:#ab2f86">"By Incoterm 2020"</span><span style="color:#9a9a9a">: </span><span style="color:#6fa823">"CIF at Saigon Port Shipping &amp; Maritime Services Joint Stock Company (SAMPET JSC)"</span><span style="color:#9a9a9a">,</span></div></div>
<div class="a" style="left:176.5px;top:521px;width:253.00px;height:1.70px;background:#7a7a7a;border-radius:1px"></div>
<div class="a" style="left:550.9px;top:238.2px;width:2.20px;height:100.10px;background:#777;border-radius:1px"></div>
<div class="a" style="left:564.6px;top:181.8px;width:386.70px;height:16.90px;background:#f0f0f0;border-bottom:0.6px solid #e3e3e3"></div>
<div class="a" style="left:563px;top:198.7px;width:19.30px;height:330.30px;background:#eeeeee;border-right:0.7px solid #e2e2e2"></div>
<div class="a" style="left:582.3px;top:198.7px;width:369.00px;height:330.30px;background:#fcfcfc"></div>
<svg class="a" style="left:566.8px;top:186.2px;" width="8" height="8" viewBox="0 0 8 8"><circle cx="3.4" cy="3.2" r="2.7" stroke="#777" stroke-width="0.8" fill="none"/><path d="M5.2 5.1 L6.8 6.7" stroke="#777" stroke-width="0.8"/></svg>
<svg class="a" style="left:583px;top:187px;" width="6" height="4" viewBox="0 0 6 4"><path d="M0.6 3.3 L3 1 L5.4 3.3" stroke="#c2c2c2" stroke-width="0.6" fill="none"/></svg>
<div class="a" style="left:596.5px;top:184px;width:19.50px;height:12.30px;background:#fff;border:0.6px solid #e6e6e6;border-radius:2px"></div>
<div class="a" style="left:600.50px;top:188.65px;font-size:5.1px;line-height:5.1px;color:#333;font-weight:400;font-family:'Liberation Sans';">1</div>
<div class="a" style="left:618.20px;top:188.85px;font-size:5.5px;line-height:5.5px;color:#555;font-weight:400;font-family:'Liberation Sans';">/ 2</div>
<svg class="a" style="left:630px;top:187.5px;" width="7" height="4" viewBox="0 0 7 4"><path d="M0.6 0.8 L3.5 3.2 L6.4 0.8" stroke="#555" stroke-width="0.6" fill="none"/></svg>
<svg class="a" style="left:726px;top:185.8px;" width="8" height="8" viewBox="0 0 8 8"><circle cx="3.4" cy="3.4" r="2.6" stroke="#777" stroke-width="0.6" fill="none"/><path d="M5.3 5.3 L7 7" stroke="#777" stroke-width="0.6"/><path d="M2.3 3.4 H4.5" stroke="#777" stroke-width="0.5"/></svg>
<div class="a" style="left:742.30px;top:188.20px;font-size:5.2px;line-height:5.2px;color:#3a3a3a;font-weight:700;font-family:'Liberation Sans';">100%</div>
<svg class="a" style="left:757px;top:188.6px;" width="4" height="3" viewBox="0 0 4 3"><path d="M0.3 0.3 H3.3 L1.8 2.6 Z" fill="#444"/></svg>
<svg class="a" style="left:768px;top:185.8px;" width="8" height="8" viewBox="0 0 8 8"><circle cx="3.4" cy="3.4" r="2.6" stroke="#777" stroke-width="0.6" fill="none"/><path d="M5.3 5.3 L7 7" stroke="#777" stroke-width="0.6"/><path d="M2.3 3.4 H4.5 M3.4 2.3 V4.5" stroke="#777" stroke-width="0.5"/></svg>
<svg class="a" style="left:865.5px;top:185.7px;" width="7" height="7" viewBox="0 0 7 7"><circle cx="3.4" cy="3.5" r="2.6" stroke="#5a5a5a" stroke-width="1" fill="none"/><path d="M2.8 2.3 L4.6 3.5 L2.8 4.7 Z" fill="#5a5a5a"/></svg>
<svg class="a" style="left:880.4px;top:185.8px;" width="7" height="7" viewBox="0 0 7 7"><path d="M3.5 0.3 V6.7 M0.3 3.5 H6.7" stroke="#555" stroke-width="0.7"/><path d="M2.6 1.2 L3.5 0.3 L4.4 1.2 M2.6 5.8 L3.5 6.7 L4.4 5.8 M1.2 2.6 L0.3 3.5 L1.2 4.4 M5.8 2.6 L6.7 3.5 L5.8 4.4" stroke="#555" stroke-width="0.5" fill="none"/></svg>
<svg class="a" style="left:895.3px;top:185.5px;" width="7" height="8" viewBox="0 0 7 8"><circle cx="3.5" cy="3" r="1.8" stroke="#666" stroke-width="0.6" fill="none"/><path d="M3.5 2 V4" stroke="#666" stroke-width="0.5"/><path d="M0.3 6.8 H6.7" stroke="#999" stroke-width="0.5"/></svg>
<svg class="a" style="left:910.2px;top:185.5px;" width="7" height="8" viewBox="0 0 7 8"><path d="M2 5 V1.2 H5 V5 L3.5 6 Z" stroke="#666" stroke-width="0.6" fill="none"/><path d="M0.3 6.8 H6.7" stroke="#999" stroke-width="0.5"/></svg>
<svg class="a" style="left:925.6px;top:185.8px;" width="7" height="7" viewBox="0 0 7 7"><path d="M1.5 2.8 V0.8 H5.5 V2.8" stroke="#555" stroke-width="0.6" fill="none"/><rect x="0.5" y="2.5" width="6" height="3" rx="0.8" fill="#5a5a5a"/><rect x="1.8" y="4.6" width="3.4" height="2" fill="#fff" stroke="#555" stroke-width="0.5"/></svg>
<svg class="a" style="left:942.8px;top:185.8px;" width="2" height="7" viewBox="0 0 2 7"><circle cx="1" cy="1" r="0.75" fill="#555"/><circle cx="1" cy="3.5" r="0.75" fill="#555"/><circle cx="1" cy="6" r="0.75" fill="#555"/></svg>
<div class="a" style="left:566.4px;top:201.8px;width:12.90px;height:11.70px;background:#dcdcdc;border-radius:1.5px"></div>
<svg class="a" style="left:569.4px;top:204.4px;" width="7" height="7" viewBox="0 0 7 7"><rect x="0.6" y="0.6" width="5.8" height="5.8" stroke="#505050" stroke-width="0.8" fill="none"/><path d="M3.5 0.6 V6.4 M0.6 3.5 H6.4" stroke="#505050" stroke-width="0.8"/></svg>
<svg class="a" style="left:569.4px;top:219.0px;" width="7" height="7" viewBox="0 0 7 7"><rect x="0.6" y="0.6" width="5.8" height="5.8" stroke="#6a6a6a" stroke-width="0.7" fill="none"/><path d="M0.6 2.4 H3.6 M0.6 4.2 H3.6 M3.6 0.6 V6.4 M3.6 3.2 H6.4" stroke="#6a6a6a" stroke-width="0.6"/></svg>
<svg class="a" style="left:569.2px;top:234.0px;" width="7" height="7" viewBox="0 0 7 7"><path d="M1.3 5.6 L5 1.9 C5.8 1.1 6.6 2 5.8 2.8 L2.4 6.2 C1.4 7 0.2 5.9 1 5 L4.4 1.6" stroke="#a8a8a8" stroke-width="0.8" fill="none" stroke-linecap="round"/></svg>
<div class="a" style="left:591.5px;top:199.6px;width:348.50px;height:245.30px;background:#fff;box-shadow:0 0.5px 4px rgba(0,0,0,.13)"></div>
<div class="a" style="left:591.2px;top:449.3px;width:348.80px;height:90.70px;background:#fff;box-shadow:0 0.5px 4px rgba(0,0,0,.13)"></div>
<div class="a" style="left:949px;top:199.0px;width:2.30px;height:218.70px;background:#7d7d7d;border-radius:1px"></div>
<div class="a" style="left:668.50px;width:200px;text-align:center;top:227.60px;font-size:3.76px;line-height:4px;color:#161616;font-weight:700;font-family:'Liberation Serif';text-shadow:0 0 0.3px rgba(0,0,0,.5)">SALES CONTRACT</div>
<div class="a" style="left:847.10px;top:233.80px;font-size:3.76px;line-height:4px;color:#161616;font-weight:400;font-family:'Liberation Serif';text-shadow:0 0 0.3px rgba(0,0,0,.5)">CONTRACT NO: BM-SK 18/04</div>
<div class="a" style="left:847.10px;top:238.10px;font-size:3.76px;line-height:4px;color:#161616;font-weight:400;font-family:'Liberation Serif';text-shadow:0 0 0.3px rgba(0,0,0,.5)">DATE: 18/06/2024</div>
<div class="a" style="left:626.10px;top:248.90px;font-size:3.76px;line-height:4px;color:#161616;font-weight:400;font-family:'Liberation Serif';text-shadow:0 0 0.3px rgba(0,0,0,.5)">Buyer</div>
<div class="a" style="left:626.10px;top:253.19px;font-size:3.76px;line-height:4px;color:#161616;font-weight:700;font-family:'Liberation Serif';text-shadow:0 0 0.3px rgba(0,0,0,.5)">BINH MINH PLASTIC JOINT STOCK COMPANY</div>
<div class="a" style="left:626.10px;top:257.48px;font-size:3.76px;line-height:4px;color:#161616;font-weight:400;font-family:'Liberation Serif';text-shadow:0 0 0.3px rgba(0,0,0,.5)">Address: 240 Hau Giang, Ward 9 District 6 Ho Chi Minh, Vietnam</div>
<div class="a" style="left:626.10px;top:261.77px;font-size:3.76px;line-height:4px;color:#161616;font-weight:400;font-family:'Liberation Serif';text-shadow:0 0 0.3px rgba(0,0,0,.5)">Tel: 84-28-3969-0973</div>
<div class="a" style="left:626.10px;top:266.06px;font-size:3.76px;line-height:4px;color:#161616;font-weight:400;font-family:'Liberation Serif';text-shadow:0 0 0.3px rgba(0,0,0,.5)">Fax: 84-28-3960 6814</div>
<div class="a" style="left:626.10px;top:270.35px;font-size:3.76px;line-height:4px;color:#161616;font-weight:400;font-family:'Liberation Serif';text-shadow:0 0 0.3px rgba(0,0,0,.5)">Represented: Mr. Nguyen Hoang Ngan (Sales Manager)</div>
<div class="a" style="left:626.10px;top:285.00px;font-size:3.76px;line-height:4px;color:#161616;font-weight:400;font-family:'Liberation Serif';text-shadow:0 0 0.3px rgba(0,0,0,.5)">Seller</div>
<div class="a" style="left:626.10px;top:289.29px;font-size:3.76px;line-height:4px;color:#161616;font-weight:700;font-family:'Liberation Serif';text-shadow:0 0 0.3px rgba(0,0,0,.5)">SK GLOBAL CHEMICAL CO., LTD</div>
<div class="a" style="left:626.10px;top:293.58px;font-size:3.76px;line-height:4px;color:#161616;font-weight:400;font-family:'Liberation Serif';text-shadow:0 0 0.3px rgba(0,0,0,.5)">Address: 280 Jangpyeong-ro, Nam-gu, Ulsan, South Korea</div>
<div class="a" style="left:626.10px;top:297.87px;font-size:3.76px;line-height:4px;color:#161616;font-weight:400;font-family:'Liberation Serif';text-shadow:0 0 0.3px rgba(0,0,0,.5)">Tel: 82-32-6824311</div>
<div class="a" style="left:626.10px;top:302.16px;font-size:3.76px;line-height:4px;color:#161616;font-weight:400;font-family:'Liberation Serif';text-shadow:0 0 0.3px rgba(0,0,0,.5)">Fax: 82-2-2121-7001</div>
<div class="a" style="left:626.10px;top:306.45px;font-size:3.76px;line-height:4px;color:#161616;font-weight:400;font-family:'Liberation Serif';text-shadow:0 0 0.3px rgba(0,0,0,.5)">Represented: Mr. Gang In-gu (Sales manager)</div>
<div class="a" style="left:626.10px;top:318.10px;font-size:3.76px;line-height:4px;color:#161616;font-weight:400;font-family:'Liberation Serif';text-shadow:0 0 0.3px rgba(0,0,0,.5)">It has been agreed that the Buyer buys and the Seller sells under the terms and conditions as follows:</div>
<div class="a" style="left:639.00px;top:325.50px;font-size:3.76px;line-height:4px;color:#161616;font-weight:700;font-family:'Liberation Serif';text-shadow:0 0 0.3px rgba(0,0,0,.5)">I. COMMODITY NAME/QUALITY/QUANTITY/PRICE</div>
<div class="a" style="left:625.5px;top:333.4px;width:285.90px;height:0.90px;background:#3a3a3a"></div>
<div class="a" style="left:625.5px;top:352.3px;width:285.90px;height:0.90px;background:#3a3a3a"></div>
<div class="a" style="left:625.5px;top:333.4px;width:0.90px;height:19.80px;background:#3a3a3a"></div>
<div class="a" style="left:910.5px;top:333.4px;width:0.90px;height:19.80px;background:#3a3a3a"></div>
<div class="a" style="left:625.5px;top:343.1px;width:285.90px;height:0.80px;background:#3a3a3a"></div>
<div class="a" style="left:638.2px;top:333.4px;width:0.80px;height:19.80px;background:#3a3a3a"></div>
<div class="a" style="left:665.6px;top:333.4px;width:0.80px;height:19.80px;background:#3a3a3a"></div>
<div class="a" style="left:717.6px;top:333.4px;width:0.80px;height:19.80px;background:#3a3a3a"></div>
<div class="a" style="left:833.4px;top:333.4px;width:0.80px;height:19.80px;background:#3a3a3a"></div>
<div class="a" style="left:859.7px;top:333.4px;width:0.80px;height:19.80px;background:#3a3a3a"></div>
<div class="a" style="left:885.7px;top:333.4px;width:0.80px;height:19.80px;background:#3a3a3a"></div>
<div class="a" style="left:532.00px;width:200px;text-align:center;top:336.60px;font-size:3.6px;line-height:4px;color:#161616;font-weight:700;font-family:'Liberation Serif';text-shadow:0 0 0.3px rgba(0,0,0,.5)">No</div>
<div class="a" style="left:552.00px;width:200px;text-align:center;top:336.60px;font-size:3.6px;line-height:4px;color:#161616;font-weight:700;font-family:'Liberation Serif';text-shadow:0 0 0.3px rgba(0,0,0,.5)">Item code</div>
<div class="a" style="left:591.70px;width:200px;text-align:center;top:336.60px;font-size:3.6px;line-height:4px;color:#161616;font-weight:700;font-family:'Liberation Serif';text-shadow:0 0 0.3px rgba(0,0,0,.5)">Name of goods</div>
<div class="a" style="left:675.50px;width:200px;text-align:center;top:336.60px;font-size:3.6px;line-height:4px;color:#161616;font-weight:700;font-family:'Liberation Serif';text-shadow:0 0 0.3px rgba(0,0,0,.5)">Description of goods</div>
<div class="a" style="left:746.50px;width:200px;text-align:center;top:334.60px;font-size:3.25px;line-height:4px;color:#161616;font-weight:700;font-family:'Liberation Serif';text-shadow:0 0 0.3px rgba(0,0,0,.5)">Quantity</div>
<div class="a" style="left:746.50px;width:200px;text-align:center;top:338.80px;font-size:3.25px;line-height:4px;color:#161616;font-weight:700;font-family:'Liberation Serif';text-shadow:0 0 0.3px rgba(0,0,0,.5)">(TON)</div>
<div class="a" style="left:772.70px;width:200px;text-align:center;top:334.60px;font-size:3.25px;line-height:4px;color:#161616;font-weight:700;font-family:'Liberation Serif';text-shadow:0 0 0.3px rgba(0,0,0,.5)">Unit price</div>
<div class="a" style="left:772.70px;width:200px;text-align:center;top:338.80px;font-size:3.25px;line-height:4px;color:#161616;font-weight:700;font-family:'Liberation Serif';text-shadow:0 0 0.3px rgba(0,0,0,.5)">(USD/TON)</div>
<div class="a" style="left:798.40px;width:200px;text-align:center;top:334.60px;font-size:3.25px;line-height:4px;color:#161616;font-weight:700;font-family:'Liberation Serif';text-shadow:0 0 0.3px rgba(0,0,0,.5)">Total value</div>
<div class="a" style="left:798.40px;width:200px;text-align:center;top:338.80px;font-size:3.25px;line-height:4px;color:#161616;font-weight:700;font-family:'Liberation Serif';text-shadow:0 0 0.3px rgba(0,0,0,.5)">(USD)</div>
<div class="a" style="left:537.50px;width:100px;text-align:right;top:346.60px;font-size:3.6px;line-height:4px;color:#161616;font-weight:400;font-family:'Liberation Serif';text-shadow:0 0 0.3px rgba(0,0,0,.5)">1</div>
<div class="a" style="left:552.00px;width:200px;text-align:center;top:346.60px;font-size:3.6px;line-height:4px;color:#161616;font-weight:400;font-family:'Liberation Serif';text-shadow:0 0 0.3px rgba(0,0,0,.5)">HDPE-1001</div>
<div class="a" style="left:591.70px;width:200px;text-align:center;top:344.50px;font-size:3.6px;line-height:4px;color:#161616;font-weight:400;font-family:'Liberation Serif';text-shadow:0 0 0.3px rgba(0,0,0,.5)">High-density Polyethylene</div>
<div class="a" style="left:591.70px;width:200px;text-align:center;top:348.60px;font-size:3.6px;line-height:4px;color:#161616;font-weight:400;font-family:'Liberation Serif';text-shadow:0 0 0.3px rgba(0,0,0,.5)">(HDPE)</div>
<div class="a" style="left:675.50px;width:200px;text-align:center;top:346.60px;font-size:3.6px;line-height:4px;color:#161616;font-weight:400;font-family:'Liberation Serif';text-shadow:0 0 0.3px rgba(0,0,0,.5)">Polyolefin Plastomer (Polymer from ethylene, density above 0.94)</div>
<div class="a" style="left:759.00px;width:100px;text-align:right;top:346.60px;font-size:3.6px;line-height:4px;color:#161616;font-weight:400;font-family:'Liberation Serif';text-shadow:0 0 0.3px rgba(0,0,0,.5)">3,000</div>
<div class="a" style="left:785.00px;width:100px;text-align:right;top:346.60px;font-size:3.6px;line-height:4px;color:#161616;font-weight:400;font-family:'Liberation Serif';text-shadow:0 0 0.3px rgba(0,0,0,.5)">1,000</div>
<div class="a" style="left:811.00px;width:100px;text-align:right;top:346.60px;font-size:3.6px;line-height:4px;color:#161616;font-weight:400;font-family:'Liberation Serif';text-shadow:0 0 0.3px rgba(0,0,0,.5)">3,000,000</div>
<div class="a" style="left:639.00px;top:357.10px;font-size:3.76px;line-height:4px;color:#161616;font-weight:400;font-family:'Liberation Serif';text-shadow:0 0 0.3px rgba(0,0,0,.5)">Total value</div>
<div class="a" style="left:639.00px;top:361.60px;font-size:3.76px;line-height:4px;color:#161616;font-weight:400;font-family:'Liberation Serif';text-shadow:0 0 0.3px rgba(0,0,0,.5)">USD 3,000,000</div>
<div class="a" style="left:639.00px;top:365.90px;font-size:3.76px;line-height:4px;color:#161616;font-weight:400;font-family:'Liberation Serif';text-shadow:0 0 0.3px rgba(0,0,0,.5)">(IN WORDS: US DOLLARS THREE MILLION)</div>
<div class="a" style="left:639.00px;top:375.60px;font-size:3.76px;line-height:4px;color:#161616;font-weight:400;font-family:'Liberation Serif';text-shadow:0 0 0.3px rgba(0,0,0,.5)">Tolerance</div>
<div class="a" style="left:639.00px;top:379.80px;font-size:3.76px;line-height:4px;color:#161616;font-weight:400;font-family:'Liberation Serif';text-shadow:0 0 0.3px rgba(0,0,0,.5)">+/- 2% amount and quantity</div>
<div class="a" style="left:639.00px;top:387.50px;font-size:3.76px;line-height:4px;color:#161616;font-weight:700;font-family:'Liberation Serif';text-shadow:0 0 0.3px rgba(0,0,0,.5)">II. SHIPMENT/PAYMENT/DOCUMENTS</div>
<div class="a" style="left:643.40px;top:395.40px;font-size:3.76px;line-height:4px;color:#161616;font-weight:400;font-family:'Liberation Serif';text-shadow:0 0 0.3px rgba(0,0,0,.5)">1. Shipment</div>
<div class="a" style="left:600px;top:400px;width:330px;height:14.6px;overflow:hidden">
<div class="a" style="left:39px;top:5.00px;font-size:3.76px;line-height:4px;color:#161616;font-family:'Liberation Serif';text-shadow:0 0 0.3px rgba(0,0,0,.5)">Time of delivery: Within 20 days after receiving advance payment</div>
<div class="a" style="left:39px;top:9.10px;font-size:3.76px;line-height:4px;color:#161616;font-family:'Liberation Serif';text-shadow:0 0 0.3px rgba(0,0,0,.5)">Port of Departure: Ulsan Seaport (KRUSN) of South Korea</div>
<div class="a" style="left:39px;top:13.20px;font-size:3.76px;line-height:4px;color:#161616;font-family:'Liberation Serif';text-shadow:0 0 0.3px rgba(0,0,0,.5)">Port of Destination: Cat Lai Port (VNCLP) of Viet Nam</div>
</div>
<div class="a" style="left:600px;top:474.3px;width:330px;height:54.3px;overflow:hidden">
<div class="a" style="left:39.00px;top:-0.90px;font-size:3.76px;line-height:4px;color:#161616;font-family:'Liberation Serif';text-shadow:0 0 0.3px rgba(0,0,0,.5)">Port of Destination: Cat Lai Port (VNCLP) of Viet Nam</div>
<div class="a" style="left:39.00px;top:2.80px;font-size:3.76px;line-height:4px;color:#161616;font-family:'Liberation Serif';text-shadow:0 0 0.3px rgba(0,0,0,.5)">Partial shipment: not allowed</div>
<div class="a" style="left:39.00px;top:6.80px;font-size:3.76px;line-height:4px;color:#161616;font-family:'Liberation Serif';text-shadow:0 0 0.3px rgba(0,0,0,.5)">Notice of shipment: Within 24 hours after the date of B/L, the Seller shall notify the by fax to the Buyer.</div>
<div class="a" style="left:39.00px;top:10.90px;font-size:3.76px;line-height:4px;color:#161616;font-family:'Liberation Serif';text-shadow:0 0 0.3px rgba(0,0,0,.5)">By Incoterm 2020, the transfer will be completed. All risks and deliveries are CIF at Saigon Port Shipping &amp; Maritime Services Joint Stock Company (SAMPET JSC), according to</div>
<div class="a" style="left:39.00px;top:14.90px;font-size:3.76px;line-height:4px;color:#161616;font-family:'Liberation Serif';text-shadow:0 0 0.3px rgba(0,0,0,.5)">the agreement between the two parties.</div>
<div class="a" style="left:43.20px;top:28.50px;font-size:3.76px;line-height:4px;color:#161616;font-family:'Liberation Serif';text-shadow:0 0 0.3px rgba(0,0,0,.5)">2. Payment</div>
<div class="a" style="left:39.00px;top:32.30px;font-size:3.76px;line-height:4px;color:#161616;font-family:'Liberation Serif';text-shadow:0 0 0.3px rgba(0,0,0,.5)">a. Payment term</div>
<div class="a" style="left:39.00px;top:36.50px;font-size:3.76px;line-height:4px;color:#161616;font-family:'Liberation Serif';text-shadow:0 0 0.3px rgba(0,0,0,.5)">Payment L/C 60 days from Bill of Lading date</div>
<div class="a" style="left:39.00px;top:44.20px;font-size:3.76px;line-height:4px;color:#161616;font-family:'Liberation Serif';text-shadow:0 0 0.3px rgba(0,0,0,.5)">b. Seller bank details</div>
<div class="a" style="left:39.00px;top:48.10px;font-size:3.76px;line-height:4px;color:#161616;font-family:'Liberation Serif';text-shadow:0 0 0.3px rgba(0,0,0,.5)">Seller bank account: 123456789</div>
<div class="a" style="left:39.00px;top:52.20px;font-size:3.76px;line-height:4px;color:#161616;font-family:'Liberation Serif';text-shadow:0 0 0.3px rgba(0,0,0,.5)">Beneficiary: SK GLOBAL CHEMICAL CO., LTD</div>
</div>
<div class="a" style="left:170.7px;top:527.4px;width:388.30px;height:1.80px;background:#eeeeee"></div>
<div class="a" style="left:170.7px;top:529.6px;width:780.60px;height:15.40px;background:#fff"></div>
<div class="a" style="left:174.00px;top:535.78px;font-size:5.63px;line-height:5.63px;color:#444;font-weight:400;font-family:'Liberation Sans';">Logs</div>
<svg class="a" style="left:929px;top:534.6px;" width="6" height="6" viewBox="0 0 6 6"><path d="M0.6 0.5 L2.3 2.1 M5.4 0.5 L3.7 2.1 M0.6 5.1 L2.3 3.5 M5.4 5.1 L3.7 3.5" stroke="#666" stroke-width="0.8"/><path d="M0.6 2.1 H2.3 M3.7 2.1 H5.4 M0.6 3.5 H2.3 M3.7 3.5 H5.4" stroke="#777" stroke-width="0.45"/></svg>
<svg class="a" style="left:942.2px;top:534.6px;" width="5" height="6" viewBox="0 0 5 6"><path d="M1.2 0.9 L3.5 2.9 L1.2 4.9" stroke="#666" stroke-width="0.8" fill="none"/></svg>
</div>
</body></html>
